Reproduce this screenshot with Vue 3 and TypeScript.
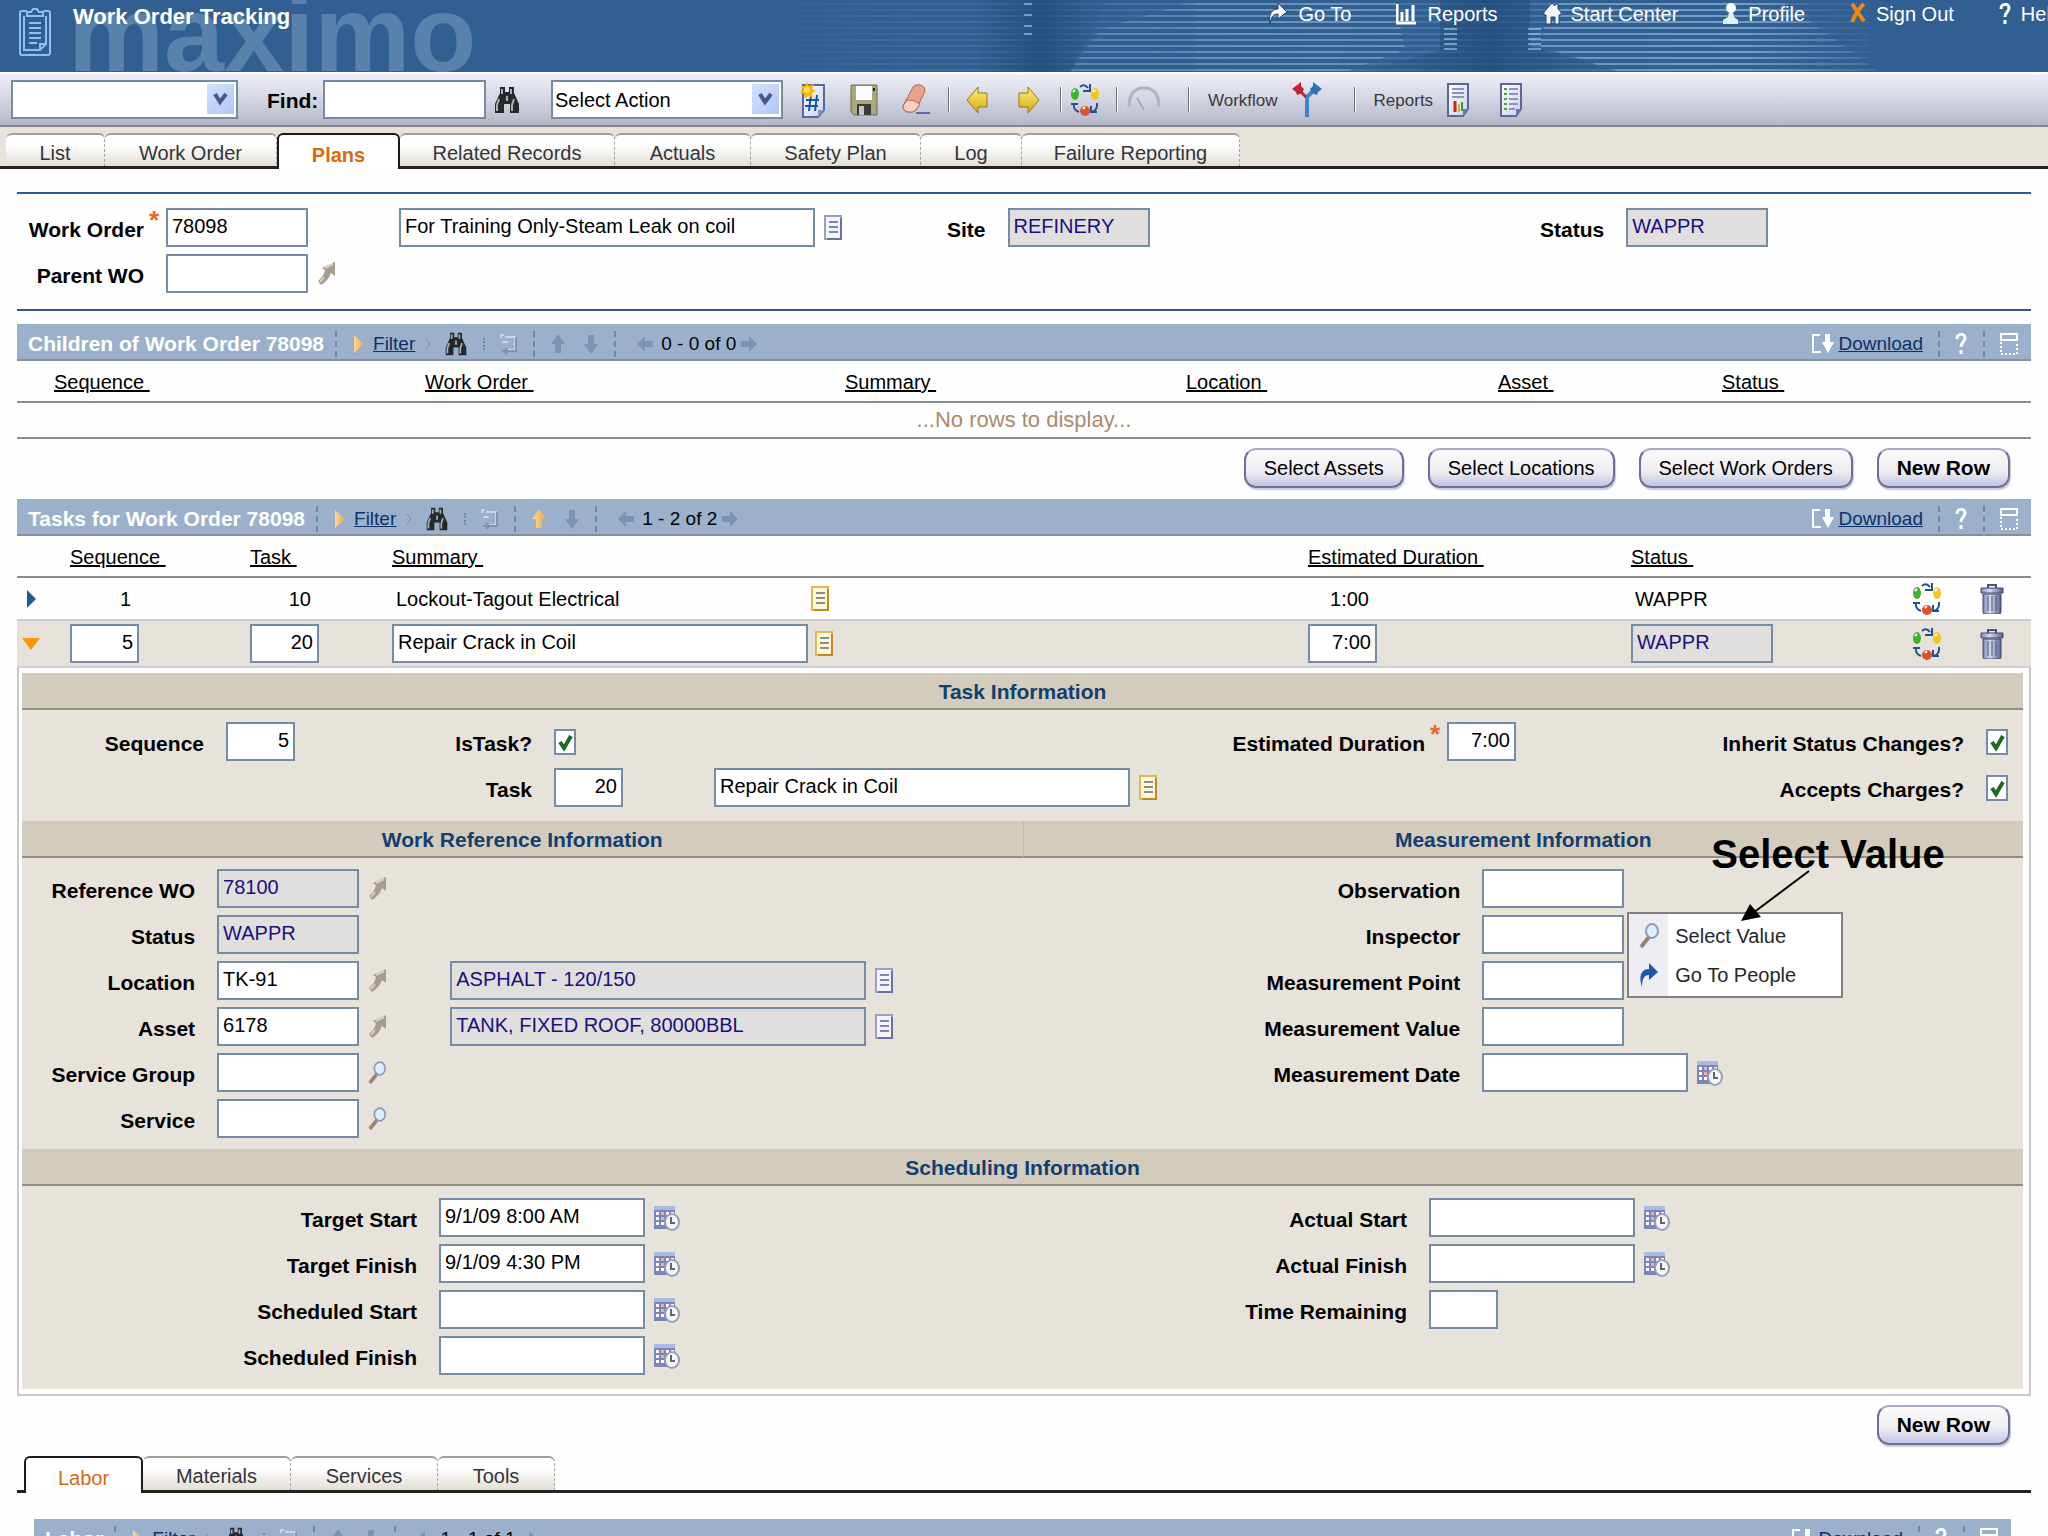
<script setup lang="ts">
import { ref } from 'vue'

interface NavItem { icon: string; width: number; label: string }
interface Tab { label: string; width: number }
interface Column { label: string; share: number }
interface Field {
  id: string
  label: string
  value?: string
  readonly?: boolean
  size?: 'short' | 'code' | 'date'
  icon?: string
  iconLabel?: string
  detail?: string
  menu?: boolean
}
interface TableBar { title: string; range: string; upActive: boolean }

const navItems: NavItem[] = [
  { icon: 'goto', width: 20, label: 'Go To' },
  { icon: 'chart', width: 21, label: 'Reports' },
  { icon: 'home', width: 18, label: 'Start Center' },
  { icon: 'person', width: 15, label: 'Profile' },
  { icon: 'cross', width: 16, label: 'Sign Out' },
  { icon: 'help', width: 12, label: 'Help' },
]

const mainTabs: Tab[] = [
  { label: 'List', width: 99 },
  { label: 'Work Order', width: 172 },
  { label: 'Plans', width: 123 },
  { label: 'Related Records', width: 215 },
  { label: 'Actuals', width: 136 },
  { label: 'Safety Plan', width: 170 },
  { label: 'Log', width: 101 },
  { label: 'Failure Reporting', width: 218 },
]
const activeTab = ref('Plans')

const planTabs: Tab[] = [
  { label: 'Labor', width: 119 },
  { label: 'Materials', width: 148 },
  { label: 'Services', width: 147 },
  { label: 'Tools', width: 117 },
]
const activePlanTab = ref('Labor')

const childColumns: Column[] = [
  { label: 'Sequence', share: 408 },
  { label: 'Work Order', share: 420 },
  { label: 'Summary', share: 341 },
  { label: 'Location', share: 312 },
  { label: 'Asset', share: 224 },
  { label: 'Status', share: 309 },
]
const taskColumns: Column[] = [
  { label: '', share: 53 },
  { label: 'Sequence', share: 180 },
  { label: 'Task', share: 142 },
  { label: 'Summary', share: 916 },
  { label: 'Estimated Duration', share: 323 },
  { label: 'Status', share: 281 },
  { label: '', share: 68 },
  { label: '', share: 51 },
]
function colWidth(columns: Column[], column: Column): string {
  const total = columns.reduce((sum, c) => sum + c.share, 0)
  return `${(column.share / total) * 100}%`
}

const bars: Record<'children' | 'tasks' | 'labor', TableBar> = {
  children: { title: 'Children of Work Order 78098', range: '0 - 0 of 0', upActive: false },
  tasks: { title: 'Tasks for Work Order 78098', range: '1 - 2 of 2', upActive: true },
  labor: { title: 'Labor', range: '1 - 1 of 1', upActive: false },
}

const references: Field[] = [
  { id: 'ref-wo', label: 'Reference WO', value: '78100', readonly: true, icon: 'detail', iconLabel: 'Reference WO detail' },
  { id: 'ref-status', label: 'Status', value: 'WAPPR', readonly: true },
  { id: 'ref-location', label: 'Location', value: 'TK-91', icon: 'detail', iconLabel: 'Location detail', detail: 'ASPHALT - 120/150' },
  { id: 'ref-asset', label: 'Asset', value: '6178', icon: 'detail', iconLabel: 'Asset detail', detail: 'TANK, FIXED ROOF, 80000BBL' },
  { id: 'ref-group', label: 'Service Group', icon: 'lens', iconLabel: 'Look up service group' },
  { id: 'ref-service', label: 'Service', icon: 'lens', iconLabel: 'Look up service' },
]
const measurements: Field[] = [
  { id: 'm-observation', label: 'Observation' },
  { id: 'm-inspector', label: 'Inspector', menu: true },
  { id: 'm-point', label: 'Measurement Point' },
  { id: 'm-value', label: 'Measurement Value' },
  { id: 'm-date', label: 'Measurement Date', size: 'date', icon: 'calendar', iconLabel: 'Pick measurement date' },
]
const planned: Field[] = [
  { id: 's-tstart', label: 'Target Start', value: '9/1/09 8:00 AM', size: 'date', icon: 'calendar' },
  { id: 's-tfinish', label: 'Target Finish', value: '9/1/09 4:30 PM', size: 'date', icon: 'calendar' },
  { id: 's-sstart', label: 'Scheduled Start', size: 'date', icon: 'calendar' },
  { id: 's-sfinish', label: 'Scheduled Finish', size: 'date', icon: 'calendar' },
]
const actual: Field[] = [
  { id: 's-astart', label: 'Actual Start', size: 'date', icon: 'calendar' },
  { id: 's-afinish', label: 'Actual Finish', size: 'date', icon: 'calendar' },
  { id: 's-remaining', label: 'Time Remaining', size: 'short' },
]
const schedule = [planned, actual]
</script>

<template>
  <div class="app">
    <svg class="sprite" aria-hidden="true">
      <defs>
        <linearGradient id="g-gold" x1="0" y1="0" x2="0" y2="1"><stop offset="0" stop-color="#fdf27a" /><stop offset="1" stop-color="#d9a514" /></linearGradient>
        <linearGradient id="g-paper" x1="0" y1="0" x2="1" y2="1"><stop offset="0" stop-color="#ffffff" /><stop offset="1" stop-color="#c9d2ec" /></linearGradient>
        <linearGradient id="g-can" x1="0" y1="0" x2="1" y2="0"><stop offset="0" stop-color="#7f88b0" /><stop offset=".4" stop-color="#d6daec" /><stop offset="1" stop-color="#55608f" /></linearGradient>
        <linearGradient id="g-amber" x1="0" y1="0" x2="1" y2="0"><stop offset="0" stop-color="#ffd894" /><stop offset="1" stop-color="#f0a848" /></linearGradient>
      </defs>
      <symbol id="i-goto" viewBox="0 0 20 24"><path d="M2 23C0 12 4 7 10 7V1l9 9-9 7v-5c-5 0-7 3-8 11Z" fill="#f4f6ff" stroke="#1d4473" stroke-width="1" /></symbol>
      <symbol id="i-chart" viewBox="0 0 21 24"><path d="M1 2v19h19M6 19v-9M11 19V7M17 19V3" fill="none" stroke="#fff" stroke-width="3" /></symbol>
      <symbol id="i-home" viewBox="0 0 18 24"><path d="M9 1 1 10v3h2v9h5v-7h4v7h4v-9h2v-3l-3-3V2h-3v2Z" fill="#f2f5fc" stroke="#1d4473" stroke-width="1" /></symbol>
      <symbol id="i-person" viewBox="0 0 15 24"><circle cx="8" cy="6" r="5" fill="#fff" /><path d="M6 10h4l1 5 4 3v4H0v-4l5-3Z" fill="#dff0f4" /></symbol>
      <symbol id="i-cross" viewBox="0 0 16 24"><path d="M2 2c4 5 8 12 12 17M14 2C9 6 5 13 2 20" fill="none" stroke="#e98a12" stroke-width="4" /></symbol>
      <symbol id="i-help" viewBox="0 0 12 24"><path d="M2 7c0-6 8-6 8-1 0 4-4 4-4 9M6 18v4" fill="none" stroke="#fff" stroke-width="3" /></symbol>
      <symbol id="i-clipboard" viewBox="0 0 32 48"><g fill="none" stroke="#8fc0f2" stroke-width="2"><path d="M8 3H3q-2 0-2 2v40q0 2 2 2h26q2 0 2-2V5q0-2-2-2h-5" /><path d="M5 8v34h16l6-6V8M21 42v-6h6" /><path d="M8 8V4h4l2-3h4l2 3h4v4Z" /><path d="M10 15h12M10 20h12M10 25h12M10 30h12M10 35h8" /></g></symbol>
      <symbol id="i-binoculars" viewBox="0 0 26 28"><path d="M6 1h5v5h4V1h5v6l5 11v9h-9v-9h-6v9H1v-9L6 7Z" fill="#26292b" /><path d="M5 13 3 19v6M20 13l-2 6v6M8 3v5M17 3v5M13 10v5" stroke="#aab0b2" stroke-width="2" fill="none" /></symbol>
      <symbol id="i-new" viewBox="0 0 26 36"><path d="M3 3h21v25l-6 7H3Z" fill="url(#g-paper)" stroke="#5667a5" stroke-width="2" /><path d="M24 28h-6v7Z" fill="#8492c8" /><path d="M11 13 9 29M17 13l-2 16M6 18h13M5 24h13" stroke="#1453a4" stroke-width="2" /><path d="m7 0 2 4 5-2-2 5 4 2-4 2 1 5-5-2-3 3-1-5-4-1 3-3-2-4 4 0Z" fill="#ffb400" /><circle cx="7" cy="8" r="3" fill="#ffec50" /></symbol>
      <symbol id="i-save" viewBox="0 0 28 32"><path d="M1 1h26v30H4l-3-3Z" fill="#a9a97c" stroke="#6b6b50" /><path d="M6 2h16v14H6Z" fill="#fbfbff" /><path d="M7 20h14v11H7Z" fill="#3a3a3a" /><path d="M9 22h5v9H9Z" fill="#c8c8c0" /><path d="M24 4v3" stroke="#222" stroke-width="2" /></symbol>
      <symbol id="i-eraser" viewBox="0 0 30 32"><path d="m1 22 10-19q2-3 7-2t5 6L14 26q-3 3-8 2t-5-6Z" fill="#e9a08c" stroke="#a96855" /><path d="m1 22 4-6q7-1 13 4l-4 6q-3 3-8 2t-5-6Z" fill="#f6d0c2" stroke="#a96855" /><path d="M14 29h14" stroke="#5a6aa8" stroke-width="2" /></symbol>
      <symbol id="i-left" viewBox="0 0 22 28"><path d="M12 1v6h9v14h-9v6L1 14Z" fill="url(#g-gold)" stroke="#957a12" stroke-width="1" /></symbol>
      <symbol id="i-right" viewBox="0 0 22 28"><path d="M10 1v6H1v14h9v6l11-13Z" fill="url(#g-gold)" stroke="#957a12" stroke-width="1" /></symbol>
      <symbol id="i-cycle" viewBox="0 0 30 34"><path d="M10 4q4-4 8 1M20 1v7h-7M4 21q-1 6 5 8M1 21h7M27 20q1 7-5 9M27 29h-6v-6" fill="none" stroke="#1f5390" stroke-width="2" /><ellipse cx="5" cy="11" rx="4" ry="6" fill="#3db32c" /><ellipse cx="25" cy="11" rx="4" ry="6" fill="#f2c81c" /><ellipse cx="15" cy="28" rx="5" ry="5" fill="#dd5029" /><path d="m3 9 2-2M23 9l2-2M13 26l2-2" stroke="#fff" stroke-width="2" /></symbol>
      <symbol id="i-gauge" viewBox="0 0 36 30"><path d="M3 22Q3 3 18 3t15 19" fill="none" stroke="#b2b4c0" stroke-width="3" /><path d="m11 13 7 12" stroke="#a9abb6" stroke-width="2" /></symbol>
      <symbol id="i-branch" viewBox="0 0 30 36"><path d="M15 35V15l8-8" fill="none" stroke="#3d86c9" stroke-width="4" /><path d="M14 15 6 7" stroke="#c8212d" stroke-width="3" /><path d="m0 7 9-7v4l3 3-2 4-5 2-1-3Z" fill="#c8212d" /><path d="m30 7-9-7v4l-3 3 2 4 5 2 1-3Z" fill="#3072b8" /></symbol>
      <symbol id="i-report" viewBox="0 0 23 34"><path d="M1 1h20v25l-5 7H1Z" fill="url(#g-paper)" stroke="#5d6796" stroke-width="2" /><path d="M5 6h12M5 10h12M5 14h12" stroke="#8b93bb" stroke-width="2" /><path d="M8 18v11" stroke="#cc2222" stroke-width="3" /><path d="M12 21v8" stroke="#eab020" stroke-width="2" /><path d="M15 19v9" stroke="#2e9a3a" stroke-width="2" /><path d="M21 26h-5v7Z" fill="#6d79b6" /></symbol>
      <symbol id="i-list" viewBox="0 0 23 34"><path d="M1 1h20v25l-5 7H1Z" fill="url(#g-paper)" stroke="#5d6796" stroke-width="2" /><path d="M9 6h9M9 11h9M9 16h9M9 21h9M9 26h6" stroke="#8b93bb" stroke-width="2" /><path d="M4 6h3M4 11h3M4 16h3M4 21h3M4 26h3" stroke="#4aa52e" stroke-width="2" /><path d="M21 26h-5v7Z" fill="#6d79b6" /></symbol>
      <symbol id="i-doc" viewBox="0 0 20 26"><path d="M1 1h16v23H1Z" fill="#f4f6ff" stroke="#9b9fc4" stroke-width="2" /><path d="M17 3v21H3" fill="none" stroke="#6a6fa6" stroke-width="2" /><path d="M5 7h9M5 12h9M5 17h9" stroke="#8085b4" stroke-width="2" /></symbol>
      <symbol id="i-doc-gold" viewBox="0 0 20 26"><path d="M1 1h16v23H1Z" fill="#fff9d8" stroke="#e2b94e" stroke-width="2" /><path d="M17 3v21H3" fill="none" stroke="#c08a22" stroke-width="2" /><path d="M5 7h9M5 12h9M5 17h9" stroke="#8d8c90" stroke-width="2" /></symbol>
      <symbol id="i-detail" viewBox="0 0 19 24"><path d="M18 0v14l-4-3q-3 8-10 12l-3-4q6-5 7-11L5 6Z" fill="#a59d8e" /><path d="m3 20 4-5M8 6l8-4" stroke="#d9d2c4" stroke-width="2" /></symbol>
      <symbol id="i-lens" viewBox="0 0 21 26"><path d="m2 24 8-10" stroke="#9a8274" stroke-width="4" /><ellipse cx="13" cy="8" rx="6" ry="7" fill="#dcefff" stroke="#8d9cb8" stroke-width="2" /></symbol>
      <symbol id="i-calendar" viewBox="0 0 26 26"><path d="M0 1h21v23H0Z" fill="#7a86bb" /><path d="M0 1h21v4H0Z" fill="#a9bbe2" /><path d="M2 7h3v3H2zM12 7h3v3h-3zM17 7h3v3h-3zM2 12h3v3H2zM12 12h3v3h-3zM2 17h3v3H2zM7 17h3v3H7z" fill="#fff" /><path d="M7 7h3v3H7zM7 12h3v3H7z" fill="#f6a9a9" /><ellipse cx="18" cy="17" rx="7" ry="8" fill="#f5f6fb" stroke="#989eb6" stroke-width="2" /><path d="M17 12v6h4" fill="none" stroke="#666" stroke-width="2" /></symbol>
      <symbol id="i-trash" viewBox="0 0 24 31"><path d="M8 5V2h8v3" fill="none" stroke="#4c5580" stroke-width="2" /><path d="M1 5h22v5H1Z" fill="url(#g-can)" stroke="#3f486f" /><path d="M3 11h18v18q0 2-2 2H5q-2 0-2-2Z" fill="url(#g-can)" stroke="#3f486f" /><path d="M8 13v15M12 13v15M16 13v15" stroke="#4c5580" stroke-width="1" /></symbol>
      <symbol id="i-jump" viewBox="0 0 20 26"><path d="M3 25C-1 13 3 7 10 7V1l9 9-9 8v-5c-5 0-7 4-7 12Z" fill="#1e57a8" /></symbol>
      <symbol id="i-bar-tri" viewBox="0 0 12 18"><path d="M1 0v18l10-9Z" fill="url(#g-amber)" /></symbol>
      <symbol id="i-chev" viewBox="0 0 6 12"><path d="m1 1 4 5-4 5" fill="none" stroke="#7488a5" stroke-width="1" /></symbol>
      <symbol id="i-flag" viewBox="0 0 18 22"><path d="M5 2H2v3M6 4h10v13H9M3 9h6" fill="none" stroke="#c9d4e3" stroke-width="2" /><path d="M17 4v14H9M3 18h6M6 15l3 3-3 3" fill="none" stroke="#7d93b0" stroke-width="2" /></symbol>
      <symbol id="i-up" viewBox="0 0 14 20"><path d="m7 0 7 10h-4v9H4v-9H0Z" /></symbol>
      <symbol id="i-down" viewBox="0 0 14 20"><path d="m7 20 7-10h-4V1H4v9H0Z" /></symbol>
      <symbol id="i-prev" viewBox="0 0 16 16"><path d="M8 0v5h8v6H8v5L0 8Z" /></symbol>
      <symbol id="i-next" viewBox="0 0 16 16"><path d="M8 0v5H0v6h8v5l8-8Z" /></symbol>
      <symbol id="i-download" viewBox="0 0 23 22"><path d="M9 2H2v17h8" fill="none" stroke="#fff" stroke-width="2" /><path d="M8 2l4 3M11 9h3V1h5v8h4l-6 11Z" fill="#fff" /></symbol>
      <symbol id="i-window" viewBox="0 0 18 22"><path d="M1 1h16v6H1Z" fill="none" stroke="#fff" stroke-width="2" /><path d="M1 9v12h16V9" fill="none" stroke="#fff" stroke-width="2" stroke-dasharray="2 2" /></symbol>
    </svg>

    <header class="banner">
      <svg class="banner-art" viewBox="0 0 1160 72" preserveAspectRatio="none" aria-hidden="true">
        <defs>
          <pattern id="p-lines" width="8" height="6" patternUnits="userSpaceOnUse"><rect width="8" height="2" y="3" fill="#9cc6e6" /></pattern>
          <linearGradient id="g-fade" x1="0" x2="1"><stop offset="0" stop-color="#fff" stop-opacity="0" /><stop offset=".15" stop-color="#fff" stop-opacity=".4" /><stop offset=".85" stop-color="#fff" stop-opacity=".7" /><stop offset="1" stop-color="#fff" stop-opacity="0" /></linearGradient>
          <linearGradient id="g-shade" x1="0" x2="1"><stop offset="0" stop-color="#1f4a78" stop-opacity="0" /><stop offset=".5" stop-color="#1f4a78" stop-opacity=".7" /><stop offset="1" stop-color="#1f4a78" stop-opacity="0" /></linearGradient>
          <mask id="m-fade"><rect width="1160" height="72" fill="url(#g-fade)" /></mask>
        </defs>
        <g mask="url(#m-fade)">
          <path d="M0 0h1110v72H0Z" fill="url(#p-lines)" opacity=".35" />
          <path d="M340 30 435 0h170l-30 72H310Z" fill="url(#p-lines)" opacity=".7" />
          <path d="M435 0h200l10 50-60 22H435Z" fill="url(#p-lines)" opacity=".8" />
          <path d="M790 0h230l100 72H860l-80-26Z" fill="url(#p-lines)" opacity=".8" />
        </g>
        <path d="M210 0h140l-40 72H220Z" fill="url(#g-shade)" />
        <path d="M680 0h90v46l90 26H600l80-22Z" fill="url(#g-shade)" />
        <g fill="#a5cbe8" opacity=".6"><path d="M264 3h8v2h-8zM264 14h8v2h-8zM264 25h8v2h-8zM264 33h8v2h-8z" /><path d="M684 28h13v2h-13zM684 33h13v2h-13zM684 38h13v2h-13zM684 43h13v2h-13zM684 48h13v2h-13zM768 28h13v2h-13zM768 33h13v2h-13zM768 38h13v2h-13zM768 43h13v2h-13zM768 48h13v2h-13z" /></g>
      </svg>
      <span class="wordmark" aria-hidden="true">maximo</span>
      <svg class="clipboard" aria-hidden="true"><use href="#i-clipboard" /></svg>
      <h1>Work Order Tracking</h1>
      <nav class="links">
        <a v-for="item in navItems" :key="item.label" href="#">
          <svg :width="item.width" height="24" aria-hidden="true"><use :href="'#i-' + item.icon" /></svg>{{ item.label }}
        </a>
      </nav>
    </header>

    <div class="toolbar">
      <span class="picker saved">
        <select aria-label="Saved queries"><option></option></select>
        <svg viewBox="0 0 27 30" aria-hidden="true"><path d="m8 10 5 8 6-8" /></svg>
      </span>
      <label class="find" for="find">Find:</label>
      <input id="find" class="find-box" type="text">
      <button class="icon bino" aria-label="Find"><svg width="26" height="28"><use href="#i-binoculars" /></svg></button>
      <span class="picker action">
        <select aria-label="Select Action"><option>Select Action</option></select>
        <svg viewBox="0 0 27 30" aria-hidden="true"><path d="m8 10 5 8 6-8" /></svg>
      </span>
      <div class="tools">
        <button class="icon" aria-label="New"><svg width="26" height="36"><use href="#i-new" /></svg></button>
        <button class="icon" aria-label="Save"><svg width="28" height="32"><use href="#i-save" /></svg></button>
        <button class="icon" aria-label="Clear"><svg width="30" height="32"><use href="#i-eraser" /></svg></button>
      </div>
      <i class="rule"></i>
      <div class="tools spaced">
        <button class="icon" aria-label="Previous"><svg width="22" height="28"><use href="#i-left" /></svg></button>
        <button class="icon" aria-label="Next"><svg width="22" height="28"><use href="#i-right" /></svg></button>
      </div>
      <i class="rule"></i>
      <button class="icon tight" aria-label="Change status"><svg width="30" height="34"><use href="#i-cycle" /></svg></button>
      <i class="rule"></i>
      <button class="icon tight meter" aria-label="Meter readings"><svg width="36" height="30"><use href="#i-gauge" /></svg></button>
      <i class="rule"></i>
      <span class="caption">Workflow</span>
      <button class="icon route" aria-label="Route workflow"><svg width="30" height="36"><use href="#i-branch" /></svg></button>
      <i class="rule"></i>
      <span class="caption">Reports</span>
      <div class="tools spaced">
        <button class="icon" aria-label="Run reports"><svg width="23" height="34"><use href="#i-report" /></svg></button>
        <button class="icon" aria-label="Report list"><svg width="23" height="34"><use href="#i-list" /></svg></button>
      </div>
    </div>

    <div class="tabs main-tabs" role="tablist">
      <button
        v-for="tab in mainTabs" :key="tab.label" role="tab" :aria-selected="tab.label === activeTab"
        :class="{ active: tab.label === activeTab }" :style="{ width: tab.width + 'px' }" @click="activeTab = tab.label"
      >{{ tab.label }}</button>
    </div>

    <main>
      <section class="record">
        <div class="stack lead">
          <div class="line">
            <label class="name" for="wo">Work Order<sup>*</sup></label>
            <input id="wo" class="code" type="text" value="78098">
            <input class="long lead-desc" type="text" aria-label="Description" value="For Training Only-Steam Leak on coil">
            <button class="icon" aria-label="Long description"><svg width="20" height="26"><use href="#i-doc" /></svg></button>
          </div>
          <div class="line">
            <label class="name" for="parent">Parent WO</label>
            <input id="parent" class="code" type="text">
            <button class="icon" aria-label="Parent WO detail"><svg width="19" height="24"><use href="#i-detail" /></svg></button>
          </div>
        </div>
        <div class="line">
          <label class="name" for="site">Site</label>
          <input id="site" class="code" type="text" readonly value="REFINERY">
        </div>
        <div class="line">
          <label class="name" for="status">Status</label>
          <input id="status" class="code" type="text" readonly value="WAPPR">
        </div>
      </section>

      <template v-for="(bar, key) in bars" :key="key">
        <template v-if="key === 'labor'">
          <div class="tabs plan-tabs" role="tablist">
            <button
              v-for="tab in planTabs" :key="tab.label" role="tab" :aria-selected="tab.label === activePlanTab"
              :class="{ active: tab.label === activePlanTab }" :style="{ width: tab.width + 'px' }" @click="activePlanTab = tab.label"
            >{{ tab.label }}</button>
          </div>
        </template>

        <div class="bar" :class="{ inset: key === 'labor' }">
          <h2>{{ bar.title }}</h2>
          <i class="dash"></i>
          <svg class="tri" width="12" height="18" aria-hidden="true"><use href="#i-bar-tri" /></svg>
          <a href="#">Filter</a>
          <svg class="chev" width="6" height="12" aria-hidden="true"><use href="#i-chev" /></svg>
          <button class="icon" aria-label="Search rows"><svg width="26" height="24"><use href="#i-binoculars" /></svg></button>
          <i class="dash short"></i>
          <button class="icon" aria-label="Clear filter"><svg width="18" height="22"><use href="#i-flag" /></svg></button>
          <i class="dash"></i>
          <button class="icon step" :class="{ lit: bar.upActive }" aria-label="Previous row"><svg width="14" height="20"><use href="#i-up" /></svg></button>
          <button class="icon step" aria-label="Next row"><svg width="14" height="20"><use href="#i-down" /></svg></button>
          <i class="dash"></i>
          <button class="icon page" aria-label="Previous page"><svg width="16" height="16"><use href="#i-prev" /></svg></button>
          <span class="range">{{ bar.range }}</span>
          <button class="icon page" aria-label="Next page"><svg width="16" height="16"><use href="#i-next" /></svg></button>
          <div class="bar-end">
            <svg width="23" height="22" aria-hidden="true"><use href="#i-download" /></svg>
            <a href="#">Download</a>
            <i class="dash"></i>
            <button class="icon" aria-label="Help"><svg width="12" height="24"><use href="#i-help" /></svg></button>
            <i class="dash"></i>
            <button class="icon" aria-label="Minimize"><svg width="18" height="22"><use href="#i-window" /></svg></button>
          </div>
        </div>

        <template v-if="key === 'children'">
          <table class="children">
            <colgroup><col v-for="c in childColumns" :key="c.label" :style="{ width: colWidth(childColumns, c) }"></colgroup>
            <thead>
              <tr><th v-for="c in childColumns" :key="c.label" scope="col"><a href="#">{{ c.label }}&nbsp;</a></th></tr>
            </thead>
            <tbody>
              <tr><td class="empty" colspan="6">...No rows to display...</td></tr>
            </tbody>
          </table>
          <div class="actions">
            <button class="pill">Select Assets</button>
            <button class="pill">Select Locations</button>
            <button class="pill">Select Work Orders</button>
            <button class="pill strong">New Row</button>
          </div>
        </template>

        <template v-if="key === 'tasks'">
          <table class="tasks">
            <colgroup><col v-for="(c, i) in taskColumns" :key="i" :style="{ width: colWidth(taskColumns, c) }"></colgroup>
            <thead>
              <tr>
                <template v-for="(c, i) in taskColumns" :key="i">
                  <th v-if="c.label" scope="col"><a href="#">{{ c.label }}&nbsp;</a></th>
                  <td v-else></td>
                </template>
              </tr>
            </thead>
            <tbody>
              <tr class="closed">
                <td><button class="icon toggle" aria-label="Open row"><svg width="9" height="18" viewBox="0 0 9 18"><path d="M0 0v18l9-9Z" fill="#1f5b94" /></svg></button></td>
                <td><span class="figure">1</span></td>
                <td><span class="figure">10</span></td>
                <td><div class="cell"><span class="plain">Lockout-Tagout Electrical</span><button class="icon" aria-label="Long description"><svg width="20" height="26"><use href="#i-doc-gold" /></svg></button></div></td>
                <td><span class="figure">1:00</span></td>
                <td><span class="plain">WAPPR</span></td>
                <td><button class="icon" aria-label="Change status"><svg width="30" height="34"><use href="#i-cycle" /></svg></button></td>
                <td><button class="icon" aria-label="Delete row"><svg width="24" height="31"><use href="#i-trash" /></svg></button></td>
              </tr>
              <tr class="opened">
                <td><button class="icon toggle wide" aria-label="Close row"><svg width="18" height="12" viewBox="0 0 18 12"><path d="M0 0h18l-9 12Z" fill="#ff9408" /></svg></button></td>
                <td><input class="short" type="text" aria-label="Sequence" value="5"></td>
                <td><input class="short" type="text" aria-label="Task" value="20"></td>
                <td><div class="cell"><input class="long" type="text" aria-label="Summary" value="Repair Crack in Coil"><button class="icon" aria-label="Long description"><svg width="20" height="26"><use href="#i-doc-gold" /></svg></button></div></td>
                <td><input class="short" type="text" aria-label="Estimated Duration" value="7:00"></td>
                <td><input class="code" type="text" aria-label="Status" readonly value="WAPPR"></td>
                <td><button class="icon" aria-label="Change status"><svg width="30" height="34"><use href="#i-cycle" /></svg></button></td>
                <td><button class="icon" aria-label="Delete row"><svg width="24" height="31"><use href="#i-trash" /></svg></button></td>
              </tr>
            </tbody>
          </table>

          <div class="detail">
            <h3>Task Information</h3>
            <div class="info">
              <label class="name" for="t-seq">Sequence</label>
              <input id="t-seq" class="short" type="text" value="5">
              <label class="name" for="t-is">IsTask?</label>
              <input id="t-is" type="checkbox" checked>
              <label class="name" for="t-dur">Estimated Duration<sup>*</sup></label>
              <input id="t-dur" class="short" type="text" value="7:00">
              <label class="name" for="t-inherit">Inherit Status Changes?</label>
              <input id="t-inherit" type="checkbox" checked>
              <label class="name second" for="t-task">Task</label>
              <div class="line task-line">
                <input id="t-task" class="short" type="text" value="20">
                <input class="long" type="text" aria-label="Task description" value="Repair Crack in Coil">
                <button class="icon" aria-label="Long description"><svg width="20" height="26"><use href="#i-doc-gold" /></svg></button>
              </div>
              <label class="name last" for="t-accept">Accepts Charges?</label>
              <input id="t-accept" type="checkbox" checked>
            </div>

            <div class="halves">
              <h3>Work Reference Information</h3>
              <h3>Measurement Information</h3>
            </div>
            <div class="halves">
              <div class="stack refs">
                <div v-for="f in references" :key="f.id" class="line">
                  <label class="name" :for="f.id">{{ f.label }}</label>
                  <div class="line value">
                    <input :id="f.id" class="code" type="text" :readonly="f.readonly" :value="f.value">
                    <button v-if="f.icon" class="icon" :aria-label="f.iconLabel"><svg width="19" height="24"><use :href="'#i-' + f.icon" /></svg></button>
                  </div>
                  <div v-if="f.detail" class="line value">
                    <input class="long" type="text" readonly :aria-label="f.label + ' description'" :value="f.detail">
                    <button class="icon" aria-label="Long description"><svg width="20" height="26"><use href="#i-doc" /></svg></button>
                  </div>
                </div>
              </div>
              <div class="stack measures">
                <div v-for="f in measurements" :key="f.id" class="line">
                  <label class="name" :for="f.id">{{ f.label }}</label>
                  <div class="line value">
                    <input :id="f.id" :class="f.size || 'code'" type="text">
                    <button v-if="f.icon" class="icon" :aria-label="f.iconLabel"><svg width="26" height="26"><use :href="'#i-' + f.icon" /></svg></button>
                    <template v-if="f.menu">
                      <div class="menu" role="menu">
                        <button role="menuitem"><span><svg width="21" height="26" aria-hidden="true"><use href="#i-lens" /></svg></span>Select Value</button>
                        <button role="menuitem"><span><svg width="20" height="26" aria-hidden="true"><use href="#i-jump" /></svg></span>Go To People</button>
                      </div>
                      <strong class="callout">Select Value</strong>
                      <svg class="pointer" width="70" height="52" viewBox="0 0 70 52" aria-hidden="true"><path d="M68 1 12 43" stroke="#000" stroke-width="2" /><path d="m0 51 9-17 11 13Z" /></svg>
                    </template>
                  </div>
                </div>
              </div>
            </div>

            <h3>Scheduling Information</h3>
            <div class="schedule">
              <div v-for="(group, g) in schedule" :key="g" class="stack">
                <div v-for="f in group" :key="f.id" class="line">
                  <label class="name" :for="f.id">{{ f.label }}</label>
                  <div class="line value">
                    <input :id="f.id" :class="f.size" type="text" :value="f.value">
                    <button v-if="f.icon" class="icon" :aria-label="'Pick ' + f.label"><svg width="26" height="26"><use :href="'#i-' + f.icon" /></svg></button>
                  </div>
                </div>
              </div>
            </div>
          </div>
          <div class="actions bottom"><button class="pill strong">New Row</button></div>
        </template>
      </template>
    </main>
  </div>
</template>

<style>
body {
  overflow: hidden;
  background: #fff;
}
</style>

<style scoped>
.app {
  --edge: #768ba5;
  height: 100vh;
  overflow: hidden;
  color: #000;
  background: #fefefe;
  font: 20px/30px "Liberation Sans", Arial, sans-serif;
  white-space: nowrap;
}
.app * { box-sizing: border-box; }
.sprite { position: absolute; width: 0; height: 0; }
h1, h2, h3 { margin: 0; }
svg { display: block; flex: none; }
button, input, select { font: inherit; color: inherit; margin: 0; border-radius: 0; }
.icon { display: flex; flex: none; padding: 0; border: 0; background: none; }

.banner {
  position: relative;
  display: flex;
  align-items: flex-start;
  height: 72px;
  overflow: hidden;
  background: #315f91;
  color: #fff;
}
.banner-art { position: absolute; left: 760px; top: 0; width: 1160px; height: 72px; }
.wordmark {
  position: absolute;
  left: 68px;
  bottom: -16px;
  color: #5882ab;
  font-size: 108px;
  font-weight: bold;
  line-height: 108px;
}
.clipboard { position: relative; width: 32px; height: 48px; margin: 8px 22px 0 19px; }
h1 { position: relative; margin-top: 2px; font-size: 22px; line-height: 30px; }
.links { position: relative; display: flex; gap: 45px; margin: -1px -14px 0 auto; }
.links a { display: flex; gap: 10px; align-items: center; color: #fff; text-decoration: none; }

.toolbar {
  display: flex;
  align-items: center;
  height: 55px;
  padding-left: 11px;
  border-top: 2px solid #fff;
  border-bottom: 2px solid #85858f;
  background: linear-gradient(#eeeff7, #d3d5e1 50%, #b3b7c6);
}
input[type="text"], select {
  height: 39px;
  padding: 0 4px 2px;
  border: 2px solid var(--edge);
  background: #fff;
  outline: 0;
}
input[type="text"][readonly] { background: #e0dfde; color: #1b0f80; }
.picker { position: relative; }
.picker select { width: 100%; padding: 0 2px; appearance: none; display: block; }
.picker svg { position: absolute; right: 4px; top: 4px; width: 27px; height: 30px; background: linear-gradient(135deg, #d3e0ff, #b0c6f8); pointer-events: none; }
.picker path { fill: none; stroke: #46597f; stroke-width: 4; }
.saved { width: 227px; }
.find { width: 56px; margin-left: 29px; padding-top: 2px; font-weight: bold; font-size: 21px; }
.find-box { width: 163px; }
.bino { margin: 0 31px 0 8px; }
.action { width: 232px; margin-right: 17px; }
.tools { display: flex; align-items: center; gap: 24px; }
.spaced { gap: 30px; margin-right: 4px; }
.rule { width: 2px; height: 25px; margin: 0 16px; border-left: 1px solid #6f7077; background: #fff; }
.tight { margin-left: -8px; }
.meter { margin-right: 10px; }
.route { margin-right: 16px; }
.caption { margin: 0 14px 0 2px; padding-top: 3px; font-size: 17px; color: #38393e; }

.tabs { display: flex; align-items: flex-end; border-bottom: 3px solid #262322; }
.tabs button {
  height: 33px;
  padding: 3px 0 0;
  border: 1px dashed #a5a39e;
  border-top: 2px solid #a09e9a;
  border-bottom: 0;
  border-left-width: 0;
  border-radius: 6px 6px 0 0;
  background: linear-gradient(#fff 30%, #e3dfd4);
  color: #33343c;
}
.tabs button.active {
  height: 36px;
  margin-bottom: -3px;
  padding-top: 5px;
  border: 2px solid #1c1a1a;
  border-bottom: 0;
  background: #fff;
  color: #d9680f;
}
.main-tabs { height: 42px; padding-left: 6px; background: #e7e2da; }
.main-tabs .active { font-weight: bold; }

main { padding: 23px 17px 0; }
.stack { display: flex; flex-direction: column; gap: 7px; }
.line { display: flex; align-items: center; gap: 9px; min-height: 39px; }
.name { position: relative; padding: 4px 22px 0 0; font-size: 21px; font-weight: bold; text-align: right; }
.name sup { position: absolute; right: 7px; top: -6px; color: #f4641e; font-size: 26px; line-height: 30px; }
.code { width: 142px; }
.short { width: 69px; text-align: right; }
.long { width: 416px; }
.date { width: 206px; }

.record {
  display: grid;
  grid-template-columns: 930fr 593fr 491fr;
  align-items: start;
  padding: 14px 0 16px;
  border: solid #2d5a92;
  border-width: 2px 0;
}
.record .line { gap: 0; }
.record .icon { margin-left: 9px; }
.lead .name { width: 149px; }
.lead-desc { margin-left: 91px; }

.bar {
  display: flex;
  align-items: center;
  height: 37px;
  margin-top: 13px;
  padding: 4px 13px 0 11px;
  border-bottom: 2px solid #85909b;
  background: #9bb1cb;
  font-size: 19px;
}
.bar h2 { color: #fff; font-size: 21px; line-height: 30px; }
.bar a { color: #0e3268; }
.dash { width: 1px; height: 26px; margin: 0 16px 0 11px; border-left: 2px dashed #7088a8; }
.dash.short { height: 12px; border-left-style: dotted; }
.tri { margin: 0 8px 0 0; }
.chev { margin: 0 12px 0 10px; }
.bar .icon + .dash { margin-left: 16px; }
.bar .icon + .dash.short { margin: 0 14px; }
.step, .page { fill: #7c93b3; }
.step.lit { fill: url(#g-amber); }
.step + .step { margin-left: 19px; }
.page { margin: 0 8px 0 5px; }
.bar-end { display: flex; align-items: center; margin-left: auto; }
.bar-end a { margin-left: 5px; }
.bar-end .dash { margin: 0 15px; }
.inset { margin: 26px 20px 0 17px; }

table { width: 100%; table-layout: fixed; border-collapse: collapse; }
th, td { padding: 0; text-align: left; font-weight: normal; }
th a { color: #000; }
thead th, thead td { height: 41px; padding-top: 2px; border-bottom: 2px solid #8d8c8c; }
.children th:first-child { padding-left: 37px; }
.empty { height: 36px; border-bottom: 2px solid #8d8c8c; text-align: center; color: #ad8b6c; font-size: 22px; }
.actions { display: flex; justify-content: flex-end; gap: 24px; padding: 9px 21px 0 0; }
.actions + .bar { margin-top: 11px; }
.pill {
  height: 40px;
  padding: 0 18px;
  border: 2px solid #6d6f99;
  border-top-color: #a9abc5;
  border-radius: 12px;
  background: linear-gradient(#fbfbfd, #ededf1 60%, #c3c5e4);
  box-shadow: 1px 2px 1px #c9cada;
}
.strong { font-weight: bold; font-size: 21px; }

.closed td { height: 43px; border-bottom: 2px solid #cfcdcb; }
.opened td { height: 47px; border-bottom: 2px solid #cfcdcb; background: #e6e1db; }
.toggle { margin-left: 10px; }
.toggle.wide { margin-left: 5px; }
.figure { display: block; width: 61px; text-align: right; }
.cell { display: flex; align-items: center; gap: 7px; }
.plain { padding-left: 4px; }
.cell .plain { width: 412px; }

.detail { padding: 5px 6px 5px 3px; border: 2px solid #cac9c9; border-top: 0; background: #fff; }
h3 {
  height: 37px;
  border-bottom: 2px solid #928e84;
  background: #d3ccbd;
  color: #123f70;
  font-size: 21px;
  line-height: 38px;
  text-align: center;
}
.info, .schedule, .refs, .measures { background: #e7e2da; }
.info {
  display: grid;
  grid-template-columns: 204fr 124fr 204fr 632fr 261fr 200fr 339fr 37fr;
  grid-template-rows: 39px 39px;
  row-gap: 7px;
  align-items: center;
  padding: 12px 0 14px;
}
.info .name { justify-self: end; }
.info .second { grid-column: 1 / 4; }
.info .last { grid-column: 5 / 8; }
.task-line .long { margin-left: 82px; }
input[type="checkbox"] {
  width: 22px;
  height: 26px;
  appearance: none;
  border: 2px solid var(--edge);
  background: #fff url("data:image/svg+xml,%3Csvg xmlns='http://www.w3.org/2000/svg' viewBox='0 0 18 22'%3E%3Cpath d='M4 11l4 6 7-12' fill='none' stroke='%231c6b23' stroke-width='4'/%3E%3C/svg%3E") center / 18px 22px no-repeat;
}
.halves { display: grid; grid-template-columns: 1fr 1fr; }
.halves h3 + h3 { border-left: 1px solid #c2bbae; }
.refs, .measures { padding: 11px 0; }
.halves .stack > .line, .schedule .stack > .line { display: grid; gap: 0; }
.value { position: relative; }
.refs > .line { grid-template-columns: 195fr 233fr 572fr; }
.measures > .line { grid-template-columns: 460fr 541fr; }
.schedule { display: grid; grid-template-columns: 1008fr 993fr; padding: 12px 0 14px; }
.schedule .stack:first-child > .line { grid-template-columns: 417fr 591fr; }
.schedule .stack:last-child > .line { grid-template-columns: 399fr 594fr; }

.menu {
  position: absolute;
  z-index: 2;
  left: 145px;
  top: -3px;
  width: 216px;
  padding: 2px 0;
  border: 2px solid #83807f;
  background: linear-gradient(90deg, #ededf3 39px, #fff 39px);
}
.menu button { display: flex; align-items: center; width: 100%; height: 39px; padding: 0; border: 0; background: none; color: #26262e; }
.menu span { display: flex; justify-content: center; width: 40px; margin-right: 6px; }
.callout { position: absolute; left: 229px; top: -84px; font-size: 40px; line-height: 46px; }
.pointer { position: absolute; z-index: 3; left: 259px; top: -45px; }

.bottom { padding-top: 9px; }
.plan-tabs { height: 37px; margin-top: 11px; padding-left: 7px; }
.plan-tabs button { height: 34px; }
.plan-tabs button.active { height: 37px; }
</style>
